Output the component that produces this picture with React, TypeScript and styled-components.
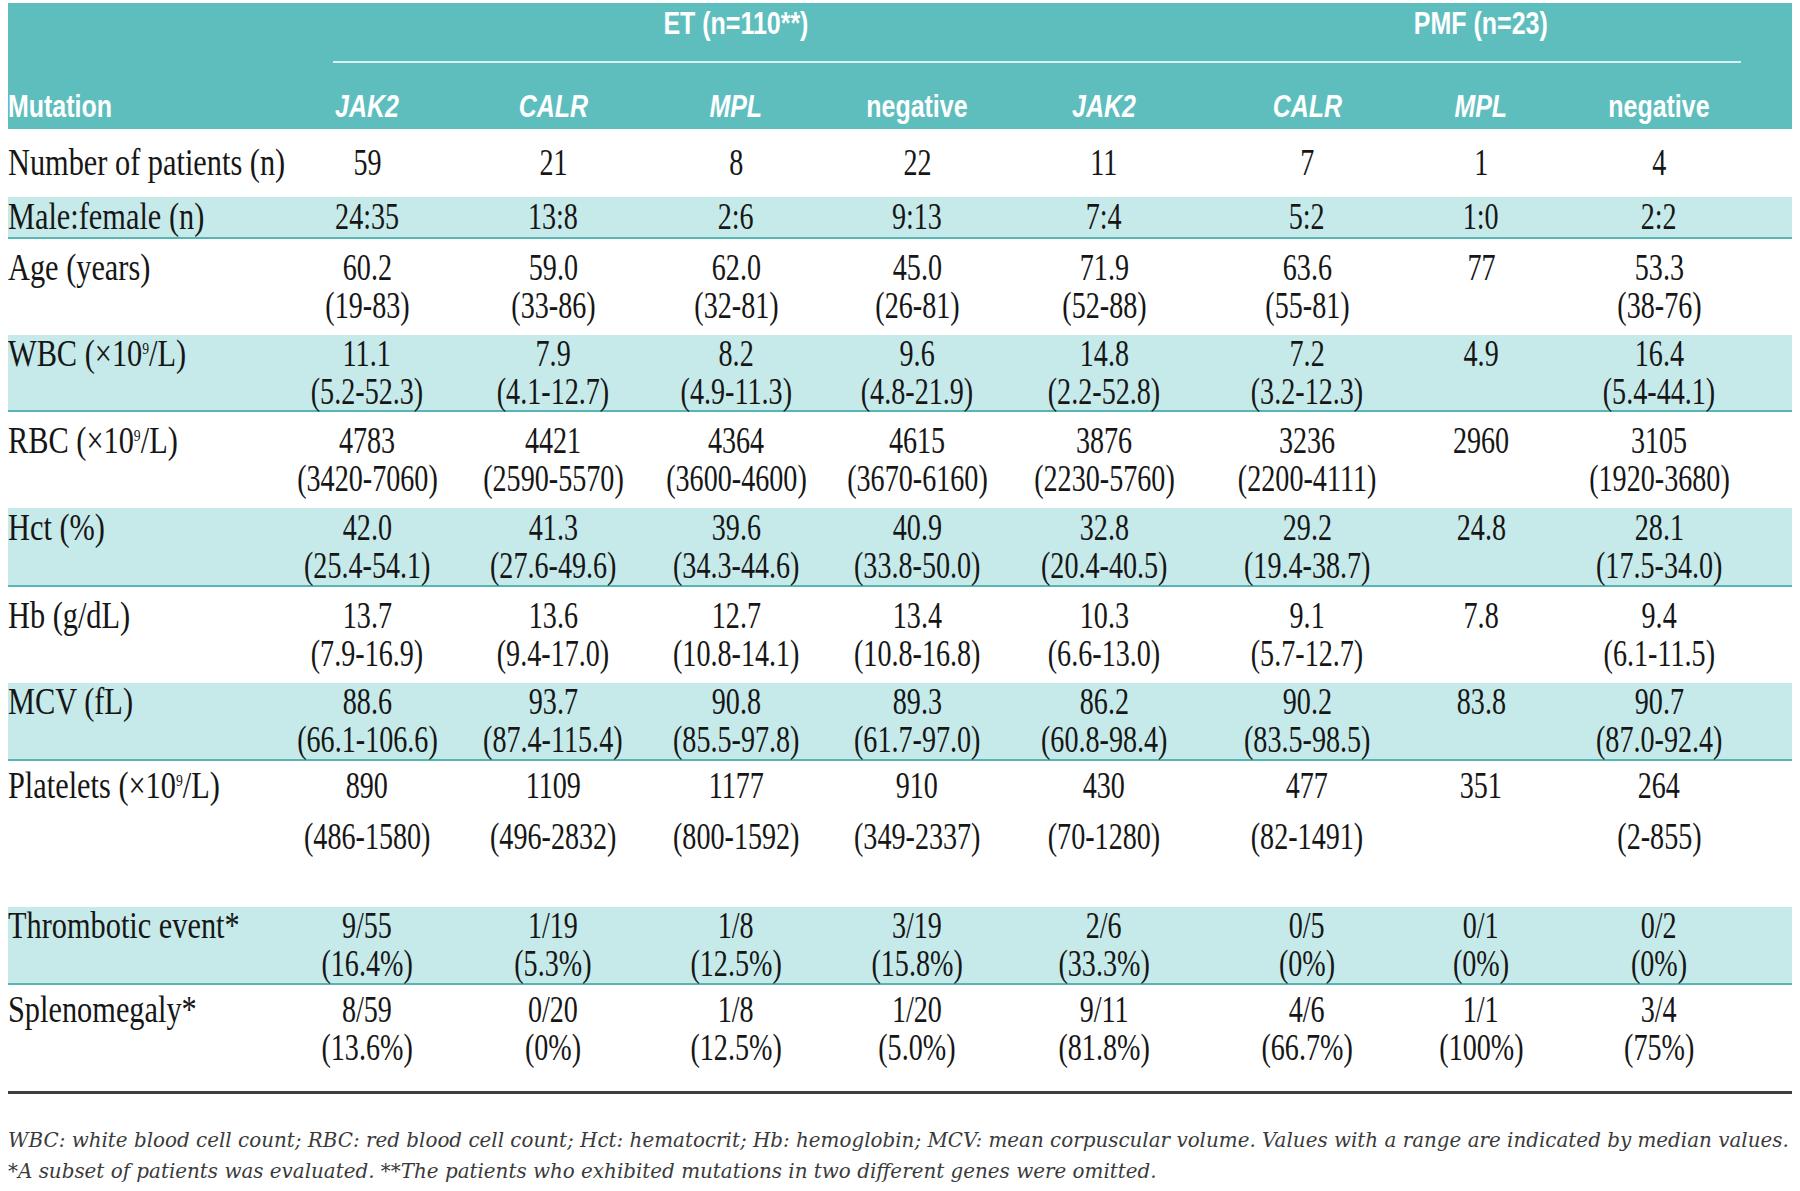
import React from "react";
import styled, { createGlobalStyle } from "styled-components";

const COLS = "288px 142px 230px 136px 226px 148px 258px 90px 266px";
const TEAL = "#5ebebe";
const BAND = "#c6eaea";
const RULE = "#56b5b5";

const GlobalStyle = createGlobalStyle`
  * { box-sizing: border-box; }
  body {
    margin: 0;
    background: #ffffff;
    font-family: "Liberation Serif", "Times New Roman", serif;
    color: #161616;
  }
`;

const Sup = styled.sup`
  font-size: 0.45em;
  vertical-align: top;
  line-height: 1;
  position: relative;
  top: 6px;
`;

const X10 = () => (
  <>
    (×10<Sup>9</Sup>/L)
  </>
);

type RowData = {
  label: React.ReactNode;
  cells: string[];
  h: number;
  band?: boolean;
  top?: number;
  gap?: number;
};

const rows: RowData[] = [
  { label: "Number of patients (n)", h: 68, cells: ["59", "21", "8", "22", "11", "7", "1", "4"] },
  { label: "Male:female (n)", h: 42, band: true, cells: ["24:35", "13:8", "2:6", "9:13", "7:4", "5:2", "1:0", "2:2"] },
  {
    label: "Age (years)",
    h: 96,
    cells: ["60.2|(19-83)", "59.0|(33-86)", "62.0|(32-81)", "45.0|(26-81)", "71.9|(52-88)", "63.6|(55-81)", "77", "53.3|(38-76)"],
  },
  {
    label: <>WBC <X10 /></>,
    h: 77,
    band: true,
    cells: ["11.1|(5.2-52.3)", "7.9|(4.1-12.7)", "8.2|(4.9-11.3)", "9.6|(4.8-21.9)", "14.8|(2.2-52.8)", "7.2|(3.2-12.3)", "4.9", "16.4|(5.4-44.1)"],
  },
  {
    label: <>RBC <X10 /></>,
    h: 96,
    cells: ["4783|(3420-7060)", "4421|(2590-5570)", "4364|(3600-4600)", "4615|(3670-6160)", "3876|(2230-5760)", "3236|(2200-4111)", "2960", "3105|(1920-3680)"],
  },
  {
    label: "Hct (%)",
    h: 79,
    band: true,
    cells: ["42.0|(25.4-54.1)", "41.3|(27.6-49.6)", "39.6|(34.3-44.6)", "40.9|(33.8-50.0)", "32.8|(20.4-40.5)", "29.2|(19.4-38.7)", "24.8", "28.1|(17.5-34.0)"],
  },
  {
    label: "Hb (g/dL)",
    h: 96,
    cells: ["13.7|(7.9-16.9)", "13.6|(9.4-17.0)", "12.7|(10.8-14.1)", "13.4|(10.8-16.8)", "10.3|(6.6-13.0)", "9.1|(5.7-12.7)", "7.8", "9.4|(6.1-11.5)"],
  },
  {
    label: "MCV (fL)",
    h: 78,
    band: true,
    cells: ["88.6|(66.1-106.6)", "93.7|(87.4-115.4)", "90.8|(85.5-97.8)", "89.3|(61.7-97.0)", "86.2|(60.8-98.4)", "90.2|(83.5-98.5)", "83.8", "90.7|(87.0-92.4)"],
  },
  {
    label: <>Platelets <X10 /></>,
    h: 146,
    top: 6,
    gap: 13,
    cells: ["890|(486-1580)", "1109|(496-2832)", "1177|(800-1592)", "910|(349-2337)", "430|(70-1280)", "477|(82-1491)", "351", "264|(2-855)"],
  },
  {
    label: "Thrombotic event*",
    h: 78,
    band: true,
    cells: ["9/55|(16.4%)", "1/19|(5.3%)", "1/8|(12.5%)", "3/19|(15.8%)", "2/6|(33.3%)", "0/5|(0%)", "0/1|(0%)", "0/2|(0%)"],
  },
  {
    label: "Splenomegaly*",
    h: 106,
    top: 6,
    cells: ["8/59|(13.6%)", "0/20|(0%)", "1/8|(12.5%)", "1/20|(5.0%)", "9/11|(81.8%)", "4/6|(66.7%)", "1/1|(100%)", "3/4|(75%)"],
  },
];

const heads = [
  { text: "JAK2", italic: true },
  { text: "CALR", italic: true },
  { text: "MPL", italic: true },
  { text: "negative" },
  { text: "JAK2", italic: true },
  { text: "CALR", italic: true },
  { text: "MPL", italic: true },
  { text: "negative" },
];

const App = () => {
  return (
    <Page>
      <GlobalStyle />
      <Table>
        <Head>
          <GroupRow>
            <GroupTitle $col={4}>
              <HeadText>ET (n=110**)</HeadText>
            </GroupTitle>
            <GroupTitle $col={8}>
              <HeadText>PMF (n=23)</HeadText>
            </GroupTitle>
            <GroupLine />
          </GroupRow>
          <ColRow>
            <HeadCell $left>
              <HeadText $origin="left">Mutation</HeadText>
            </HeadCell>
            {heads.map((h, i) => (
              <HeadCell key={i}>
                <HeadText $italic={h.italic}>{h.text}</HeadText>
              </HeadCell>
            ))}
          </ColRow>
        </Head>
        {rows.map((r, i) => (
          <Row key={i} $h={r.h} $band={r.band} $top={r.top}>
            <Label>
              <Cond $origin="left" $scale={0.82}>
                {r.label}
              </Cond>
            </Label>
            {r.cells.map((c, j) => (
              <Cell key={j} $gap={r.gap ?? 0}>
                {c.split("|").map((line, k) => (
                  <Cond key={k} $scale={0.76}>
                    {line}
                  </Cond>
                ))}
              </Cell>
            ))}
          </Row>
        ))}
        <BottomRule />
      </Table>
      <Notes>
        <p>
          WBC: white blood cell count; RBC: red blood cell count; Hct: hematocrit; Hb: hemoglobin; MCV: mean corpuscular volume. Values
          with a range are indicated by median values.
        </p>
        <p>*A subset of patients was evaluated. **The patients who exhibited mutations in two different genes were omitted.</p>
      </Notes>
    </Page>
  );
};

export default App;

const Page = styled.div`
  width: 1800px;
  padding: 3px 8px 0 8px;
`;

const Table = styled.div`
  width: 1784px;
`;

const Head = styled.div`
  background: ${TEAL};
  color: #ffffff;
`;

const GroupRow = styled.div`
  display: grid;
  grid-template-columns: ${COLS};
  grid-template-rows: 58px 2px;
  height: 60px;
`;

const GroupTitle = styled.div<{ $col: number }>`
  grid-column: ${(p) => p.$col};
  grid-row: 1;
  display: flex;
  justify-content: center;
  padding-top: 1px;
  line-height: 38px;
`;

const GroupLine = styled.div`
  grid-column: 2 / -1;
  grid-row: 2;
  margin: 0 51px 0 37px;
  background: #d8f1f1;
`;

const ColRow = styled.div`
  display: grid;
  grid-template-columns: ${COLS};
  height: 66px;
  align-items: end;
  padding-bottom: 4px;
  line-height: 38px;
`;

const HeadCell = styled.div<{ $left?: boolean }>`
  display: flex;
  justify-content: ${(p) => (p.$left ? "flex-start" : "center")};
`;

const HeadText = styled.span<{ $italic?: boolean; $origin?: string }>`
  display: inline-block;
  white-space: nowrap;
  font-family: "Liberation Sans", Arial, sans-serif;
  font-weight: 700;
  font-size: 32px;
  font-style: ${(p) => (p.$italic ? "italic" : "normal")};
  transform: scaleX(0.78);
  transform-origin: ${(p) => p.$origin ?? "center"};
`;

const Row = styled.div<{ $h: number; $band?: boolean; $top?: number }>`
  display: grid;
  grid-template-columns: ${COLS};
  height: ${(p) => p.$h}px;
  background: ${(p) => (p.$band ? BAND : "#ffffff")};
  border-bottom: ${(p) => (p.$band ? `2px solid ${RULE}` : "none")};
  align-content: ${(p) => (p.$top !== undefined ? "start" : "center")};
  padding-top: ${(p) => p.$top ?? 0}px;
  font-size: 37px;
  line-height: 38px;
`;

const Label = styled.div`
  white-space: nowrap;
`;

const Cell = styled.div<{ $gap: number }>`
  display: flex;
  flex-direction: column;
  align-items: center;
  gap: ${(p) => p.$gap}px;
`;

const Cond = styled.span<{ $origin?: string; $scale: number }>`
  display: inline-block;
  white-space: nowrap;
  transform: scaleX(${(p) => p.$scale});
  transform-origin: ${(p) => p.$origin ?? "center"};
`;

const BottomRule = styled.div`
  height: 3px;
  background: #3e3e3e;
`;

const Notes = styled.div`
  margin-top: 31px;
  font-family: "DejaVu Serif", "Liberation Serif", serif;
  font-style: italic;
  font-size: 19.9px;
  line-height: 31px;
  color: #3a3a3a;
  white-space: nowrap;

  p {
    margin: 0;
  }
`;
